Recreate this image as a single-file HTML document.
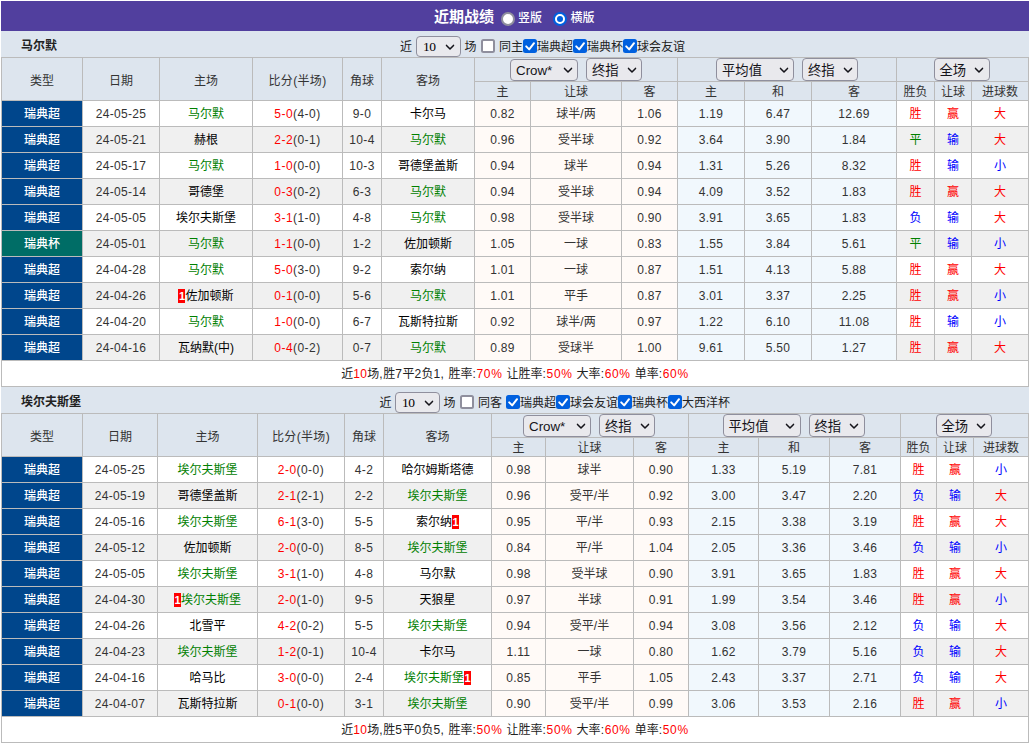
<!DOCTYPE html>
<html lang="zh-CN"><head><meta charset="utf-8"><title>近期战绩</title>
<style>
html,body{margin:0;padding:0;background:#fff;}
body{font-family:"Liberation Sans","Noto Sans CJK SC",sans-serif;font-size:12px;color:#000;width:1034px;height:745px;overflow:hidden;position:relative;}
#wrap{position:absolute;left:1px;top:1px;width:1028px;}
.top{height:30px;background:#513f9e;color:#fff;position:relative;}
.top .tt{position:absolute;left:433px;top:6px;font-size:15px;font-weight:bold;line-height:20px;}
.top .rd{position:absolute;top:11px;box-sizing:border-box;width:14px;height:14px;border:2px solid #8f8f9d;border-radius:50%;background:#fff;}
.top .rd.on{border-color:#0060df;}
.top .rd.on i{position:absolute;left:2px;top:2px;width:6px;height:6px;border-radius:50%;background:#0060df;}
.top .rl{position:absolute;top:7px;font-size:12px;line-height:20px;font-weight:500;}
.sec{height:26px;background:#dde5ee;position:relative;}
.sec .name{position:absolute;left:20px;top:5px;font-weight:bold;line-height:20px;color:#222;}
.sec .ft{position:absolute;top:6px;line-height:20px;color:#222;white-space:nowrap;}
.sel{display:block;box-sizing:border-box;height:23px;border:1px solid #8f8f9d;border-radius:4px;background:#e9e9ed;color:#15141a;font-size:13.33px;position:relative;text-align:left;flex:none;}
.sel.lat{height:22px;}
.sel .st{position:absolute;left:5px;top:2px;line-height:20px;white-space:nowrap;}
.sel .chev{position:absolute;right:4.5px;top:8px;display:block;}
.sel.lat .chev{top:7px;}
.sel.lat .st{top:1px;}
.sg{display:flex;justify-content:center;align-items:flex-end;gap:8px;height:23px;}
.sec .sel{position:absolute;top:5px;height:21px;}
.sec .sel .st{line-height:19px;top:0;left:6px;font-family:"Liberation Serif",serif;font-size:13.5px;letter-spacing:-0.5px;color:#000;}
.sec .sel .chev{top:7px;right:5px;}
.cb{display:block;box-sizing:border-box;width:14px;height:14px;border:2px solid #8f8f9d;border-radius:2.5px;background:#fff;}
.cb.on{border:0;background:#0060df;}
.cb svg{display:block;}
.sec .cb{position:absolute;top:8px;}
table.t{border-collapse:separate;border-spacing:0;table-layout:fixed;border-right:1px solid #bbb;border-bottom:1px solid #bbb;}
table.t th,table.t td{border-left:1px solid #bbb;border-top:1px solid #bbb;padding:0;text-align:center;font-weight:normal;box-sizing:border-box;overflow:hidden;white-space:nowrap;}
table.t th{background:#dde5ee;color:#333;}
tr.h1 th{height:24px;}
tr.h1 th.sc{height:24px;}
tr.h2 th{height:19px;line-height:16px;padding-top:2px;}
tr.odd td,tr.even td,tr.sum td{height:26px;line-height:23px;padding-top:2px;}
tr.odd td,tr.even td{color:#333;}
tr.odd td{background:#fff;}
tr.even td{background:#f0f0f0;}
table.t td.lg{background:#00468c !important;color:#fff;font-weight:500;}
table.t td.lg.cup{background:#006d66 !important;}
td.oa{background:#fffaf7 !important;}
td.ob{background:#f1f8fd !important;}
td.tm{color:#000 !important;}
.r{color:#f00 !important;}
.g{color:#008000 !important;}
.b{color:#00f !important;}
.card{background:#f00;color:#fff;font-weight:bold;font-size:11px;display:inline-block;width:7px;line-height:14px;text-align:center;letter-spacing:0;}
tr.sum td{background:#fff;color:#222;}
.l{letter-spacing:.67px;}
.d{letter-spacing:.33px;}
td.n{letter-spacing:.33px;}
.sg.sl{position:relative;left:-1px;}
td.sc{letter-spacing:.45px;}

</style></head>
<body>
<div id="wrap">
<div class="top"><span class="tt">近期战绩</span><span class="rd" style="left:500px"></span><span class="rl" style="left:517px">竖版</span><span class="rd on" style="left:552px"><i></i></span><span class="rl" style="left:569.5px">横版</span></div>
<div class="sec s_1"><span class="name">马尔默</span><span class="ft" style="left:399px">近</span><span class="sel sn" style="left:415px;width:45px"><span class="st">10</span><svg class="chev" width="10" height="7" viewBox="0 0 10 7"><path d="M1.5 1.4 L5 5 L8.5 1.4" fill="none" stroke="#15141a" stroke-width="1.5" stroke-linecap="round" stroke-linejoin="round"/></svg></span><span class="ft" style="left:463.5px">场</span><span style="left:480px" class="cb"></span><span class="ft" style="left:498px">同主</span><span style="left:522px" class="cb on"><svg width="14" height="14" viewBox="0 0 14 14"><path d="M3.2 7.4 L6.2 10.4 L11 4.2" fill="none" stroke="#fff" stroke-width="2" stroke-linecap="round" stroke-linejoin="round"/></svg></span><span class="ft" style="left:536px">瑞典超</span><span style="left:572px" class="cb on"><svg width="14" height="14" viewBox="0 0 14 14"><path d="M3.2 7.4 L6.2 10.4 L11 4.2" fill="none" stroke="#fff" stroke-width="2" stroke-linecap="round" stroke-linejoin="round"/></svg></span><span class="ft" style="left:586px">瑞典杯</span><span style="left:622px" class="cb on"><svg width="14" height="14" viewBox="0 0 14 14"><path d="M3.2 7.4 L6.2 10.4 L11 4.2" fill="none" stroke="#fff" stroke-width="2" stroke-linecap="round" stroke-linejoin="round"/></svg></span><span class="ft" style="left:636px">球会友谊</span></div>
<table class="t" style="width:1027px"><colgroup>
<col style="width:81px">
<col style="width:77px">
<col style="width:93px">
<col style="width:90px">
<col style="width:39px">
<col style="width:93px">
<col style="width:56px">
<col style="width:91px">
<col style="width:56px">
<col style="width:67px">
<col style="width:67px">
<col style="width:85px">
<col style="width:38px">
<col style="width:37px">
<col style="width:57px">
</colgroup>
<tr class="h1"><th rowspan="2">类型</th><th rowspan="2">日期</th><th rowspan="2">主场</th><th rowspan="2" class="d">比分(半场)</th><th rowspan="2">角球</th><th rowspan="2">客场</th><th colspan="3" class="sc"><div class="sg"><span class="sel lat" style="width:68px"><span class="st">Crow*</span><svg class="chev" width="10" height="7" viewBox="0 0 10 7"><path d="M1.5 1.4 L5 5 L8.5 1.4" fill="none" stroke="#15141a" stroke-width="1.5" stroke-linecap="round" stroke-linejoin="round"/></svg></span><span class="sel " style="width:56px"><span class="st">终指</span><svg class="chev" width="10" height="7" viewBox="0 0 10 7"><path d="M1.5 1.4 L5 5 L8.5 1.4" fill="none" stroke="#15141a" stroke-width="1.5" stroke-linecap="round" stroke-linejoin="round"/></svg></span></div></th><th colspan="3" class="sc"><div class="sg"><span class="sel " style="width:78px"><span class="st">平均值</span><svg class="chev" width="10" height="7" viewBox="0 0 10 7"><path d="M1.5 1.4 L5 5 L8.5 1.4" fill="none" stroke="#15141a" stroke-width="1.5" stroke-linecap="round" stroke-linejoin="round"/></svg></span><span class="sel " style="width:56px"><span class="st">终指</span><svg class="chev" width="10" height="7" viewBox="0 0 10 7"><path d="M1.5 1.4 L5 5 L8.5 1.4" fill="none" stroke="#15141a" stroke-width="1.5" stroke-linecap="round" stroke-linejoin="round"/></svg></span></div></th><th colspan="3" class="sc"><div class="sg sl"><span class="sel " style="width:56px"><span class="st">全场</span><svg class="chev" width="10" height="7" viewBox="0 0 10 7"><path d="M1.5 1.4 L5 5 L8.5 1.4" fill="none" stroke="#15141a" stroke-width="1.5" stroke-linecap="round" stroke-linejoin="round"/></svg></span></div></th></tr>
<tr class="h2"><th>主</th><th>让球</th><th>客</th><th>主</th><th>和</th><th>客</th><th>胜负</th><th>让球</th><th>进球数</th></tr>
<tr class="odd"><td class="lg">瑞典超</td><td class="n">24-05-25</td><td class="tm"><span class="g">马尔默</span></td><td class="n sc"><span class="r">5-0</span>(4-0)</td><td class="n">9-0</td><td class="tm">卡尔马</td><td class="oa n">0.82</td><td class="oa">球半/两</td><td class="oa n">1.06</td><td class="ob n">1.19</td><td class="ob n">6.47</td><td class="ob n">12.69</td><td class="r">胜</td><td class="r">赢</td><td class="r">大</td></tr>
<tr class="even"><td class="lg">瑞典超</td><td class="n">24-05-21</td><td class="tm">赫根</td><td class="n sc"><span class="r">2-2</span>(0-1)</td><td class="n">10-4</td><td class="tm"><span class="g">马尔默</span></td><td class="oa n">0.96</td><td class="oa">受半球</td><td class="oa n">0.92</td><td class="ob n">3.64</td><td class="ob n">3.90</td><td class="ob n">1.84</td><td class="g">平</td><td class="b">输</td><td class="r">大</td></tr>
<tr class="odd"><td class="lg">瑞典超</td><td class="n">24-05-17</td><td class="tm"><span class="g">马尔默</span></td><td class="n sc"><span class="r">1-0</span>(0-0)</td><td class="n">10-3</td><td class="tm">哥德堡盖斯</td><td class="oa n">0.94</td><td class="oa">球半</td><td class="oa n">0.94</td><td class="ob n">1.31</td><td class="ob n">5.26</td><td class="ob n">8.32</td><td class="r">胜</td><td class="b">输</td><td class="b">小</td></tr>
<tr class="even"><td class="lg">瑞典超</td><td class="n">24-05-14</td><td class="tm">哥德堡</td><td class="n sc"><span class="r">0-3</span>(0-2)</td><td class="n">6-3</td><td class="tm"><span class="g">马尔默</span></td><td class="oa n">0.94</td><td class="oa">受半球</td><td class="oa n">0.94</td><td class="ob n">4.09</td><td class="ob n">3.52</td><td class="ob n">1.83</td><td class="r">胜</td><td class="r">赢</td><td class="r">大</td></tr>
<tr class="odd"><td class="lg">瑞典超</td><td class="n">24-05-05</td><td class="tm">埃尔夫斯堡</td><td class="n sc"><span class="r">3-1</span>(1-0)</td><td class="n">4-8</td><td class="tm"><span class="g">马尔默</span></td><td class="oa n">0.98</td><td class="oa">受半球</td><td class="oa n">0.90</td><td class="ob n">3.91</td><td class="ob n">3.65</td><td class="ob n">1.83</td><td class="b">负</td><td class="b">输</td><td class="r">大</td></tr>
<tr class="even"><td class="lg cup">瑞典杯</td><td class="n">24-05-01</td><td class="tm"><span class="g">马尔默</span></td><td class="n sc"><span class="r">1-1</span>(0-0)</td><td class="n">1-2</td><td class="tm">佐加顿斯</td><td class="oa n">1.05</td><td class="oa">一球</td><td class="oa n">0.83</td><td class="ob n">1.55</td><td class="ob n">3.84</td><td class="ob n">5.61</td><td class="g">平</td><td class="b">输</td><td class="b">小</td></tr>
<tr class="odd"><td class="lg">瑞典超</td><td class="n">24-04-28</td><td class="tm"><span class="g">马尔默</span></td><td class="n sc"><span class="r">5-0</span>(3-0)</td><td class="n">9-2</td><td class="tm">索尔纳</td><td class="oa n">1.01</td><td class="oa">一球</td><td class="oa n">0.87</td><td class="ob n">1.51</td><td class="ob n">4.13</td><td class="ob n">5.88</td><td class="r">胜</td><td class="r">赢</td><td class="r">大</td></tr>
<tr class="even"><td class="lg">瑞典超</td><td class="n">24-04-26</td><td class="tm"><span class="card">1</span>佐加顿斯</td><td class="n sc"><span class="r">0-1</span>(0-0)</td><td class="n">5-6</td><td class="tm"><span class="g">马尔默</span></td><td class="oa n">1.01</td><td class="oa">平手</td><td class="oa n">0.87</td><td class="ob n">3.01</td><td class="ob n">3.37</td><td class="ob n">2.25</td><td class="r">胜</td><td class="r">赢</td><td class="b">小</td></tr>
<tr class="odd"><td class="lg">瑞典超</td><td class="n">24-04-20</td><td class="tm"><span class="g">马尔默</span></td><td class="n sc"><span class="r">1-0</span>(0-0)</td><td class="n">6-7</td><td class="tm">瓦斯特拉斯</td><td class="oa n">0.92</td><td class="oa">球半/两</td><td class="oa n">0.97</td><td class="ob n">1.22</td><td class="ob n">6.10</td><td class="ob n">11.08</td><td class="r">胜</td><td class="b">输</td><td class="b">小</td></tr>
<tr class="even"><td class="lg">瑞典超</td><td class="n">24-04-16</td><td class="tm">瓦纳默(中)</td><td class="n sc"><span class="r">0-4</span>(0-2)</td><td class="n">0-7</td><td class="tm"><span class="g">马尔默</span></td><td class="oa n">0.89</td><td class="oa">受球半</td><td class="oa n">1.00</td><td class="ob n">9.61</td><td class="ob n">5.50</td><td class="ob n">1.27</td><td class="r">胜</td><td class="r">赢</td><td class="r">大</td></tr>
<tr class="sum"><td colspan="15">近<span class="r d">10</span>场<span class="l">,</span>胜<span class="d">7</span>平<span class="d">2</span>负<span class="d">1</span><span class="l">, </span>胜率<span class="l">:</span><span class="r l">70%</span><span class="l"> </span>让胜率<span class="l">:</span><span class="r l">50%</span><span class="l"> </span>大率<span class="l">:</span><span class="r l">60%</span><span class="l"> </span>单率<span class="l">:</span><span class="r l">60%</span></td></tr></table>
<div class="sec s_2"><span class="name">埃尔夫斯堡</span><span class="ft" style="left:378.5px">近</span><span class="sel sn" style="left:394px;width:45px"><span class="st">10</span><svg class="chev" width="10" height="7" viewBox="0 0 10 7"><path d="M1.5 1.4 L5 5 L8.5 1.4" fill="none" stroke="#15141a" stroke-width="1.5" stroke-linecap="round" stroke-linejoin="round"/></svg></span><span class="ft" style="left:442.5px">场</span><span style="left:459px" class="cb"></span><span class="ft" style="left:477px">同客</span><span style="left:505px" class="cb on"><svg width="14" height="14" viewBox="0 0 14 14"><path d="M3.2 7.4 L6.2 10.4 L11 4.2" fill="none" stroke="#fff" stroke-width="2" stroke-linecap="round" stroke-linejoin="round"/></svg></span><span class="ft" style="left:519px">瑞典超</span><span style="left:555px" class="cb on"><svg width="14" height="14" viewBox="0 0 14 14"><path d="M3.2 7.4 L6.2 10.4 L11 4.2" fill="none" stroke="#fff" stroke-width="2" stroke-linecap="round" stroke-linejoin="round"/></svg></span><span class="ft" style="left:569px">球会友谊</span><span style="left:617px" class="cb on"><svg width="14" height="14" viewBox="0 0 14 14"><path d="M3.2 7.4 L6.2 10.4 L11 4.2" fill="none" stroke="#fff" stroke-width="2" stroke-linecap="round" stroke-linejoin="round"/></svg></span><span class="ft" style="left:631px">瑞典杯</span><span style="left:667px" class="cb on"><svg width="14" height="14" viewBox="0 0 14 14"><path d="M3.2 7.4 L6.2 10.4 L11 4.2" fill="none" stroke="#fff" stroke-width="2" stroke-linecap="round" stroke-linejoin="round"/></svg></span><span class="ft" style="left:681px">大西洋杯</span></div>
<table class="t" style="width:1027px"><colgroup>
<col style="width:81px">
<col style="width:75px">
<col style="width:100px">
<col style="width:87px">
<col style="width:39px">
<col style="width:108px">
<col style="width:54px">
<col style="width:88px">
<col style="width:55px">
<col style="width:70px">
<col style="width:71px">
<col style="width:71px">
<col style="width:36px">
<col style="width:37px">
<col style="width:55px">
</colgroup>
<tr class="h1"><th rowspan="2">类型</th><th rowspan="2">日期</th><th rowspan="2">主场</th><th rowspan="2" class="d">比分(半场)</th><th rowspan="2">角球</th><th rowspan="2">客场</th><th colspan="3" class="sc"><div class="sg sl"><span class="sel lat" style="width:68px"><span class="st">Crow*</span><svg class="chev" width="10" height="7" viewBox="0 0 10 7"><path d="M1.5 1.4 L5 5 L8.5 1.4" fill="none" stroke="#15141a" stroke-width="1.5" stroke-linecap="round" stroke-linejoin="round"/></svg></span><span class="sel " style="width:56px"><span class="st">终指</span><svg class="chev" width="10" height="7" viewBox="0 0 10 7"><path d="M1.5 1.4 L5 5 L8.5 1.4" fill="none" stroke="#15141a" stroke-width="1.5" stroke-linecap="round" stroke-linejoin="round"/></svg></span></div></th><th colspan="3" class="sc"><div class="sg sl"><span class="sel " style="width:78px"><span class="st">平均值</span><svg class="chev" width="10" height="7" viewBox="0 0 10 7"><path d="M1.5 1.4 L5 5 L8.5 1.4" fill="none" stroke="#15141a" stroke-width="1.5" stroke-linecap="round" stroke-linejoin="round"/></svg></span><span class="sel " style="width:56px"><span class="st">终指</span><svg class="chev" width="10" height="7" viewBox="0 0 10 7"><path d="M1.5 1.4 L5 5 L8.5 1.4" fill="none" stroke="#15141a" stroke-width="1.5" stroke-linecap="round" stroke-linejoin="round"/></svg></span></div></th><th colspan="3" class="sc"><div class="sg sl"><span class="sel " style="width:56px"><span class="st">全场</span><svg class="chev" width="10" height="7" viewBox="0 0 10 7"><path d="M1.5 1.4 L5 5 L8.5 1.4" fill="none" stroke="#15141a" stroke-width="1.5" stroke-linecap="round" stroke-linejoin="round"/></svg></span></div></th></tr>
<tr class="h2"><th>主</th><th>让球</th><th>客</th><th>主</th><th>和</th><th>客</th><th>胜负</th><th>让球</th><th>进球数</th></tr>
<tr class="odd"><td class="lg">瑞典超</td><td class="n">24-05-25</td><td class="tm"><span class="g">埃尔夫斯堡</span></td><td class="n sc"><span class="r">2-0</span>(0-0)</td><td class="n">4-2</td><td class="tm">哈尔姆斯塔德</td><td class="oa n">0.98</td><td class="oa">球半</td><td class="oa n">0.90</td><td class="ob n">1.33</td><td class="ob n">5.19</td><td class="ob n">7.81</td><td class="r">胜</td><td class="r">赢</td><td class="b">小</td></tr>
<tr class="even"><td class="lg">瑞典超</td><td class="n">24-05-19</td><td class="tm">哥德堡盖斯</td><td class="n sc"><span class="r">2-1</span>(2-1)</td><td class="n">2-2</td><td class="tm"><span class="g">埃尔夫斯堡</span></td><td class="oa n">0.96</td><td class="oa">受平/半</td><td class="oa n">0.92</td><td class="ob n">3.00</td><td class="ob n">3.47</td><td class="ob n">2.20</td><td class="b">负</td><td class="b">输</td><td class="r">大</td></tr>
<tr class="odd"><td class="lg">瑞典超</td><td class="n">24-05-16</td><td class="tm"><span class="g">埃尔夫斯堡</span></td><td class="n sc"><span class="r">6-1</span>(3-0)</td><td class="n">5-5</td><td class="tm">索尔纳<span class="card">1</span></td><td class="oa n">0.95</td><td class="oa">平/半</td><td class="oa n">0.93</td><td class="ob n">2.15</td><td class="ob n">3.38</td><td class="ob n">3.19</td><td class="r">胜</td><td class="r">赢</td><td class="r">大</td></tr>
<tr class="even"><td class="lg">瑞典超</td><td class="n">24-05-12</td><td class="tm">佐加顿斯</td><td class="n sc"><span class="r">2-0</span>(0-0)</td><td class="n">8-5</td><td class="tm"><span class="g">埃尔夫斯堡</span></td><td class="oa n">0.84</td><td class="oa">平/半</td><td class="oa n">1.04</td><td class="ob n">2.05</td><td class="ob n">3.36</td><td class="ob n">3.46</td><td class="b">负</td><td class="b">输</td><td class="b">小</td></tr>
<tr class="odd"><td class="lg">瑞典超</td><td class="n">24-05-05</td><td class="tm"><span class="g">埃尔夫斯堡</span></td><td class="n sc"><span class="r">3-1</span>(1-0)</td><td class="n">4-8</td><td class="tm">马尔默</td><td class="oa n">0.98</td><td class="oa">受半球</td><td class="oa n">0.90</td><td class="ob n">3.91</td><td class="ob n">3.65</td><td class="ob n">1.83</td><td class="r">胜</td><td class="r">赢</td><td class="r">大</td></tr>
<tr class="even"><td class="lg">瑞典超</td><td class="n">24-04-30</td><td class="tm"><span class="g"><span class="card">1</span>埃尔夫斯堡</span></td><td class="n sc"><span class="r">2-0</span>(1-0)</td><td class="n">9-5</td><td class="tm">天狼星</td><td class="oa n">0.97</td><td class="oa">半球</td><td class="oa n">0.91</td><td class="ob n">1.99</td><td class="ob n">3.54</td><td class="ob n">3.46</td><td class="r">胜</td><td class="r">赢</td><td class="b">小</td></tr>
<tr class="odd"><td class="lg">瑞典超</td><td class="n">24-04-26</td><td class="tm">北雪平</td><td class="n sc"><span class="r">4-2</span>(0-2)</td><td class="n">5-5</td><td class="tm"><span class="g">埃尔夫斯堡</span></td><td class="oa n">0.94</td><td class="oa">受平/半</td><td class="oa n">0.94</td><td class="ob n">3.08</td><td class="ob n">3.56</td><td class="ob n">2.12</td><td class="b">负</td><td class="b">输</td><td class="r">大</td></tr>
<tr class="even"><td class="lg">瑞典超</td><td class="n">24-04-23</td><td class="tm"><span class="g">埃尔夫斯堡</span></td><td class="n sc"><span class="r">1-2</span>(0-1)</td><td class="n">10-4</td><td class="tm">卡尔马</td><td class="oa n">1.11</td><td class="oa">一球</td><td class="oa n">0.80</td><td class="ob n">1.62</td><td class="ob n">3.79</td><td class="ob n">5.16</td><td class="b">负</td><td class="b">输</td><td class="r">大</td></tr>
<tr class="odd"><td class="lg">瑞典超</td><td class="n">24-04-16</td><td class="tm">哈马比</td><td class="n sc"><span class="r">3-0</span>(0-0)</td><td class="n">2-4</td><td class="tm"><span class="g">埃尔夫斯堡<span class="card">1</span></span></td><td class="oa n">0.85</td><td class="oa">平手</td><td class="oa n">1.05</td><td class="ob n">2.43</td><td class="ob n">3.37</td><td class="ob n">2.71</td><td class="b">负</td><td class="b">输</td><td class="r">大</td></tr>
<tr class="even"><td class="lg">瑞典超</td><td class="n">24-04-07</td><td class="tm">瓦斯特拉斯</td><td class="n sc"><span class="r">0-1</span>(0-0)</td><td class="n">3-1</td><td class="tm"><span class="g">埃尔夫斯堡</span></td><td class="oa n">0.90</td><td class="oa">受平/半</td><td class="oa n">0.99</td><td class="ob n">3.06</td><td class="ob n">3.53</td><td class="ob n">2.16</td><td class="r">胜</td><td class="r">赢</td><td class="b">小</td></tr>
<tr class="sum"><td colspan="15">近<span class="r d">10</span>场<span class="l">,</span>胜<span class="d">5</span>平<span class="d">0</span>负<span class="d">5</span><span class="l">, </span>胜率<span class="l">:</span><span class="r l">50%</span><span class="l"> </span>让胜率<span class="l">:</span><span class="r l">50%</span><span class="l"> </span>大率<span class="l">:</span><span class="r l">60%</span><span class="l"> </span>单率<span class="l">:</span><span class="r l">50%</span></td></tr></table>
</div>
</body></html>
